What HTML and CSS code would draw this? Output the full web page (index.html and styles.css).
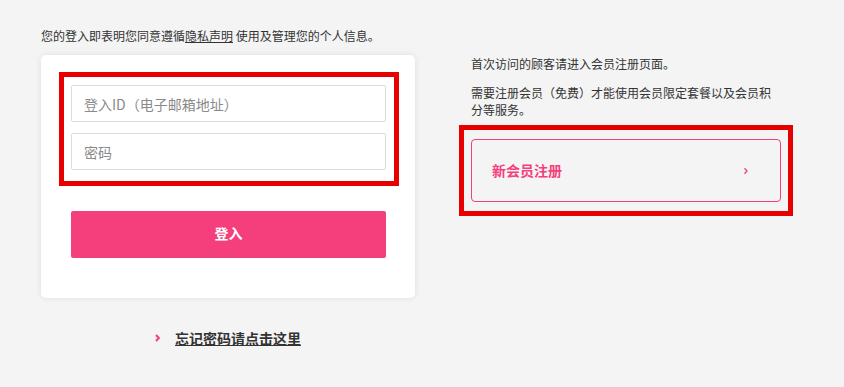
FILE: index.html
```html
<!DOCTYPE html>
<html lang="zh-CN">
<head>
<meta charset="utf-8">
<title>登入</title>
<link rel="stylesheet" href="styles.css">
</head>
<body>
<div class="page">
  <p class="notice">您的登入即表明您同意遵循<a class="ul" href="#">隐私声明</a> 使用及管理您的个人信息。</p>
  <div class="columns">
    <div class="left">
      <div class="card">
        <div class="fields">
          <input class="field" type="text" placeholder="登入ID（电子邮箱地址）">
          <input class="field" type="password" placeholder="密码">
          <span class="mark mark-fields"></span>
        </div>
        <button class="login" type="button">登入</button>
      </div>
      <div class="forgot">
        <svg class="chev-bold" width="5" height="8" viewBox="0 0 5 8"><polyline points="1,1 3.8,4 1,7" fill="none" stroke="#f43f7c" stroke-width="2"/></svg>
        <a href="#" class="forgot-link">忘记密码请点击这里</a>
      </div>
    </div>
    <div class="right">
      <p class="info">首次访问的顾客请进入会员注册页面。</p>
      <p class="info info2">需要注册会员（免费）才能使用会员限定套餐以及会员积分等服务。</p>
      <div class="reg-wrap">
        <a href="#" class="register">
          <span>新会员注册</span>
          <svg width="6" height="8" viewBox="0 0 6 8"><polyline points="1.5,1.3 4,4 1.5,6.7" fill="none" stroke="#f43f7c" stroke-width="1.3"/></svg>
        </a>
        <span class="mark mark-reg"></span>
      </div>
    </div>
  </div>
</div>
</body>
</html>
```
FILE: styles.css
```css
* { box-sizing: border-box; }
html, body { margin: 0; padding: 0; }
body {
  background: #f4f4f4;
  font-family: "Noto Sans CJK SC", "Noto Sans", "Liberation Sans", sans-serif;
  color: #333;
  font-size: 12px;
  line-height: 17px;
}
.page {
  padding: 27px 0 0 41px;
}
.notice {
  margin: 0 0 11px;
}
.ul {
  color: #333;
  text-decoration: underline;
}
.columns {
  display: flex;
  align-items: flex-start;
  gap: 56px;
}
.left {
  width: 374px;
}
.card {
  background: #fff;
  border-radius: 5px;
  box-shadow: 0 0 6px rgba(0,0,0,0.09);
  padding: 30px 29px 40px 30px;
}
.fields {
  position: relative;
  display: flex;
  flex-direction: column;
  gap: 11px;
}
.field {
  display: block;
  width: 100%;
  height: 37px;
  border: 1px solid #dcdcdc;
  border-radius: 2px;
  background: #fff;
  padding: 0 12px;
  font-family: inherit;
  font-size: 14px;
  color: #333;
  outline: none;
}
.field::placeholder { color: #8a8a8a; }
.mark {
  position: absolute;
  border: 5px solid #e60000;
  pointer-events: none;
}
.mark-fields {
  top: -13px;
  bottom: -16px;
  left: -12px;
  right: -13px;
}
.login {
  display: block;
  width: 100%;
  height: 47px;
  margin-top: 41px;
  padding: 0 0 3px;
  border: none;
  border-radius: 2px;
  background: #f43f7c;
  color: #fff;
  font-family: inherit;
  font-weight: 700;
  font-size: 14px;
}
.forgot {
  display: flex;
  align-items: center;
  justify-content: center;
  gap: 15px;
  margin-top: 30px;
  height: 20px;
}
.forgot-link {
  color: #333;
  font-weight: 700;
  font-size: 14px;
  line-height: 20px;
  text-decoration: underline;
}
.right {
  width: 310px;
}
.info { margin: 0; }
.info2 { margin-top: 12px; }
.reg-wrap {
  position: relative;
  margin-top: 21px;
}
.register {
  display: flex;
  align-items: center;
  justify-content: space-between;
  height: 63px;
  border: 1px solid #f43f7c;
  border-radius: 4px;
  padding: 0 31px 0 20px;
  color: #f43f7c;
  font-weight: 700;
  font-size: 14px;
  text-decoration: none;
}
.mark-reg {
  top: -14px;
  bottom: -14px;
  left: -12px;
  right: -12px;
}
```
